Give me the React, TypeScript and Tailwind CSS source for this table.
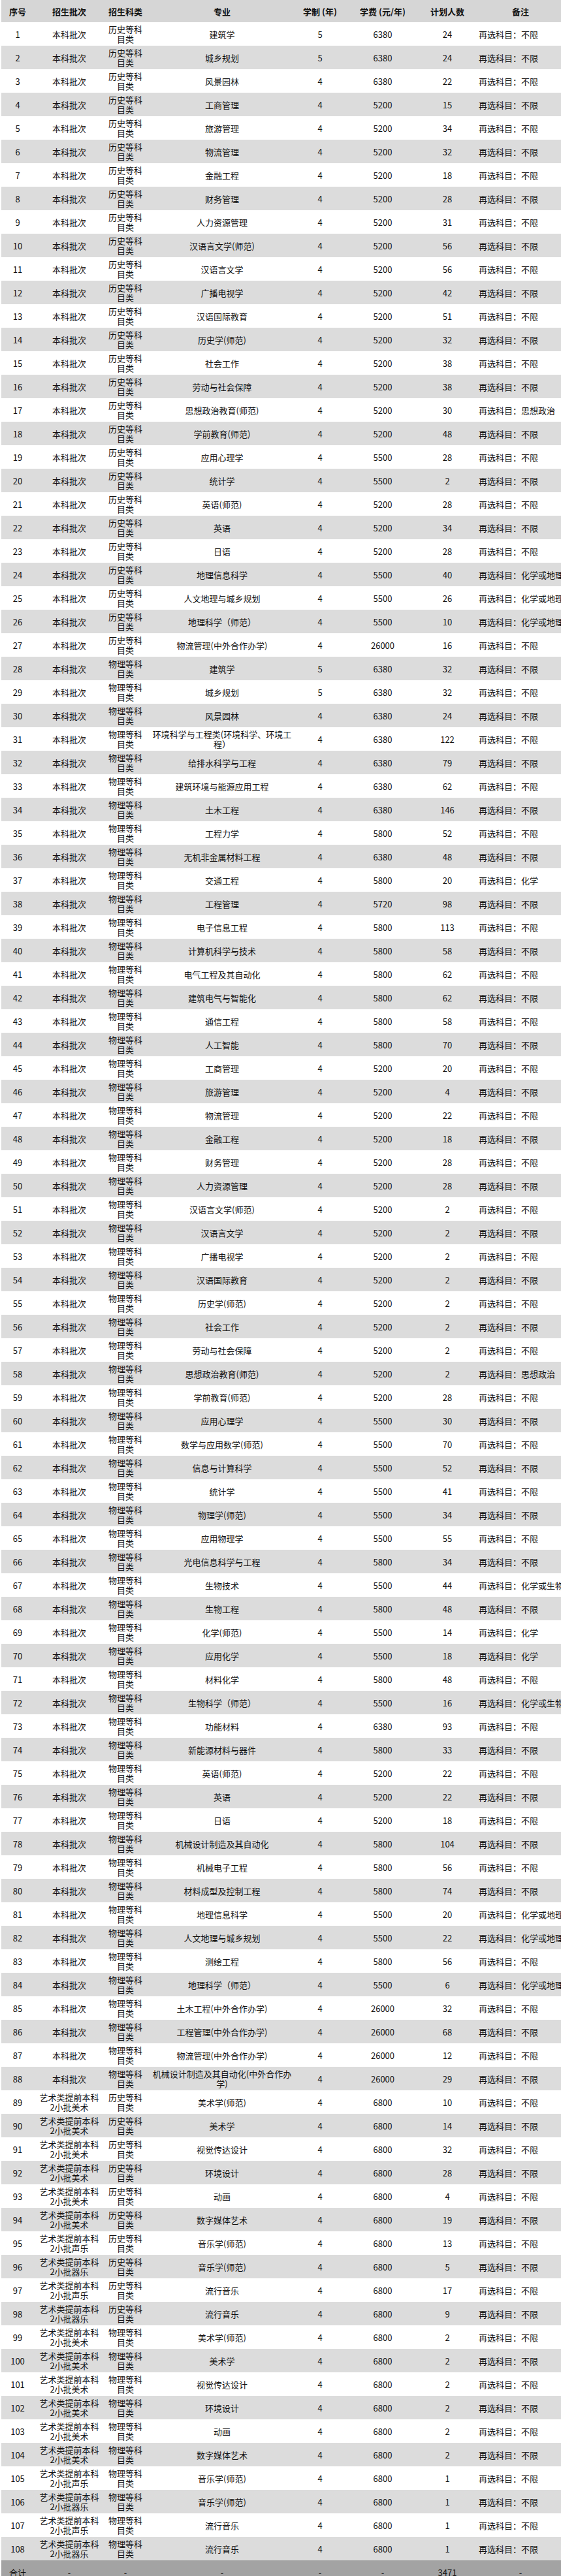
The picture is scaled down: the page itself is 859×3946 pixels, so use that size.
import React from 'react'

// 招生计划表
const B = '本科批次'
const MS = '艺术类提前本科2小批美术'
const SY = '艺术类提前本科2小批声乐'
const QY = '艺术类提前本科2小批器乐'
const H = '历史等科目类'
const P = '物理等科目类'
const BX = '不限'
const DL = '化学或地理'
const SW = '化学或生物'

type Row = [string, string, string, number, number, number, string]

const rows: Row[] = [
  [B, H, '建筑学', 5, 6380, 24, BX],
  [B, H, '城乡规划', 5, 6380, 24, BX],
  [B, H, '风景园林', 4, 6380, 22, BX],
  [B, H, '工商管理', 4, 5200, 15, BX],
  [B, H, '旅游管理', 4, 5200, 34, BX],
  [B, H, '物流管理', 4, 5200, 32, BX],
  [B, H, '金融工程', 4, 5200, 18, BX],
  [B, H, '财务管理', 4, 5200, 28, BX],
  [B, H, '人力资源管理', 4, 5200, 31, BX],
  [B, H, '汉语言文学(师范)', 4, 5200, 56, BX],
  [B, H, '汉语言文学', 4, 5200, 56, BX],
  [B, H, '广播电视学', 4, 5200, 42, BX],
  [B, H, '汉语国际教育', 4, 5200, 51, BX],
  [B, H, '历史学(师范)', 4, 5200, 32, BX],
  [B, H, '社会工作', 4, 5200, 38, BX],
  [B, H, '劳动与社会保障', 4, 5200, 38, BX],
  [B, H, '思想政治教育(师范)', 4, 5200, 30, '思想政治'],
  [B, H, '学前教育(师范)', 4, 5200, 48, BX],
  [B, H, '应用心理学', 4, 5500, 28, BX],
  [B, H, '统计学', 4, 5500, 2, BX],
  [B, H, '英语(师范)', 4, 5200, 28, BX],
  [B, H, '英语', 4, 5200, 34, BX],
  [B, H, '日语', 4, 5200, 28, BX],
  [B, H, '地理信息科学', 4, 5500, 40, DL],
  [B, H, '人文地理与城乡规划', 4, 5500, 26, DL],
  [B, H, '地理科学（师范）', 4, 5500, 10, DL],
  [B, H, '物流管理(中外合作办学)', 4, 26000, 16, BX],
  [B, P, '建筑学', 5, 6380, 32, BX],
  [B, P, '城乡规划', 5, 6380, 32, BX],
  [B, P, '风景园林', 4, 6380, 24, BX],
  [B, P, '环境科学与工程类(环境科学、环境工程）', 4, 6380, 122, BX],
  [B, P, '给排水科学与工程', 4, 6380, 79, BX],
  [B, P, '建筑环境与能源应用工程', 4, 6380, 62, BX],
  [B, P, '土木工程', 4, 6380, 146, BX],
  [B, P, '工程力学', 4, 5800, 52, BX],
  [B, P, '无机非金属材料工程', 4, 6380, 48, BX],
  [B, P, '交通工程', 4, 5800, 20, '化学'],
  [B, P, '工程管理', 4, 5720, 98, BX],
  [B, P, '电子信息工程', 4, 5800, 113, BX],
  [B, P, '计算机科学与技术', 4, 5800, 58, BX],
  [B, P, '电气工程及其自动化', 4, 5800, 62, BX],
  [B, P, '建筑电气与智能化', 4, 5800, 62, BX],
  [B, P, '通信工程', 4, 5800, 58, BX],
  [B, P, '人工智能', 4, 5800, 70, BX],
  [B, P, '工商管理', 4, 5200, 20, BX],
  [B, P, '旅游管理', 4, 5200, 4, BX],
  [B, P, '物流管理', 4, 5200, 22, BX],
  [B, P, '金融工程', 4, 5200, 18, BX],
  [B, P, '财务管理', 4, 5200, 28, BX],
  [B, P, '人力资源管理', 4, 5200, 28, BX],
  [B, P, '汉语言文学(师范)', 4, 5200, 2, BX],
  [B, P, '汉语言文学', 4, 5200, 2, BX],
  [B, P, '广播电视学', 4, 5200, 2, BX],
  [B, P, '汉语国际教育', 4, 5200, 2, BX],
  [B, P, '历史学(师范)', 4, 5200, 2, BX],
  [B, P, '社会工作', 4, 5200, 2, BX],
  [B, P, '劳动与社会保障', 4, 5200, 2, BX],
  [B, P, '思想政治教育(师范)', 4, 5200, 2, '思想政治'],
  [B, P, '学前教育(师范)', 4, 5200, 28, BX],
  [B, P, '应用心理学', 4, 5500, 30, BX],
  [B, P, '数学与应用数学(师范)', 4, 5500, 70, BX],
  [B, P, '信息与计算科学', 4, 5500, 52, BX],
  [B, P, '统计学', 4, 5500, 41, BX],
  [B, P, '物理学(师范)', 4, 5500, 34, BX],
  [B, P, '应用物理学', 4, 5500, 55, BX],
  [B, P, '光电信息科学与工程', 4, 5800, 34, BX],
  [B, P, '生物技术', 4, 5500, 44, SW],
  [B, P, '生物工程', 4, 5800, 48, BX],
  [B, P, '化学(师范)', 4, 5500, 14, '化学'],
  [B, P, '应用化学', 4, 5500, 18, '化学'],
  [B, P, '材料化学', 4, 5800, 48, BX],
  [B, P, '生物科学（师范）', 4, 5500, 16, SW],
  [B, P, '功能材料', 4, 6380, 93, BX],
  [B, P, '新能源材料与器件', 4, 5800, 33, BX],
  [B, P, '英语(师范)', 4, 5200, 22, BX],
  [B, P, '英语', 4, 5200, 22, BX],
  [B, P, '日语', 4, 5200, 18, BX],
  [B, P, '机械设计制造及其自动化', 4, 5800, 104, BX],
  [B, P, '机械电子工程', 4, 5800, 56, BX],
  [B, P, '材料成型及控制工程', 4, 5800, 74, BX],
  [B, P, '地理信息科学', 4, 5500, 20, DL],
  [B, P, '人文地理与城乡规划', 4, 5500, 22, DL],
  [B, P, '测绘工程', 4, 5800, 56, BX],
  [B, P, '地理科学（师范）', 4, 5500, 6, DL],
  [B, P, '土木工程(中外合作办学)', 4, 26000, 32, BX],
  [B, P, '工程管理(中外合作办学)', 4, 26000, 68, BX],
  [B, P, '物流管理(中外合作办学)', 4, 26000, 12, BX],
  [B, P, '机械设计制造及其自动化(中外合作办学)', 4, 26000, 29, BX],
  [MS, H, '美术学(师范)', 4, 6800, 10, BX],
  [MS, H, '美术学', 4, 6800, 14, BX],
  [MS, H, '视觉传达设计', 4, 6800, 32, BX],
  [MS, H, '环境设计', 4, 6800, 28, BX],
  [MS, H, '动画', 4, 6800, 4, BX],
  [MS, H, '数字媒体艺术', 4, 6800, 19, BX],
  [SY, H, '音乐学(师范)', 4, 6800, 13, BX],
  [QY, H, '音乐学(师范)', 4, 6800, 5, BX],
  [SY, H, '流行音乐', 4, 6800, 17, BX],
  [QY, H, '流行音乐', 4, 6800, 9, BX],
  [MS, P, '美术学(师范)', 4, 6800, 2, BX],
  [MS, P, '美术学', 4, 6800, 2, BX],
  [MS, P, '视觉传达设计', 4, 6800, 2, BX],
  [MS, P, '环境设计', 4, 6800, 2, BX],
  [MS, P, '动画', 4, 6800, 2, BX],
  [MS, P, '数字媒体艺术', 4, 6800, 2, BX],
  [SY, P, '音乐学(师范)', 4, 6800, 1, BX],
  [QY, P, '音乐学(师范)', 4, 6800, 1, BX],
  [SY, P, '流行音乐', 4, 6800, 1, BX],
  [QY, P, '流行音乐', 4, 6800, 1, BX],
]

export default function App() {
  return (
    <div className="w-full overflow-hidden bg-white">
      <table className="ml-[2px] w-[870px] table-fixed border-collapse font-['Noto_Sans_CJK_SC',sans-serif] text-[13px] leading-[15px] text-[#111]">
        <colgroup>
          <col className="w-[50px]" />
          <col className="w-[108px]" />
          <col className="w-[64px]" />
          <col className="w-[232px]" />
          <col className="w-[68px]" />
          <col className="w-[124px]" />
          <col className="w-[74px]" />
          <col className="w-[150px]" />
        </colgroup>
        <thead>
          <tr className="h-[34px] bg-[#d6d6d6] font-bold">
            <th className="px-1 text-center">序号</th>
            <th className="px-1 text-center">招生批次</th>
            <th className="px-1 text-center">招生科类</th>
            <th className="px-1 text-center">专业</th>
            <th className="px-1 text-center">学制 (年)</th>
            <th className="px-1 text-center">学费 (元/年)</th>
            <th className="px-1 text-center">计划人数</th>
            <th className="px-1 text-center">备注</th>
          </tr>
        </thead>
        <tbody>
          {rows.map((r, i) => (
            <tr key={i} className={i % 2 === 1 ? 'h-[36px] bg-[#dcdcdc]' : 'h-[36px] bg-white'}>
              <td className="px-1 text-center">{i + 1}</td>
              <td className="px-[6px] text-center">{r[0]}</td>
              <td className="px-[4px] text-center">{r[1]}</td>
              <td className="px-[7px] text-center">{r[2]}</td>
              <td className="px-1 text-center">{r[3]}</td>
              <td className="px-1 text-center">{r[4]}</td>
              <td className="px-1 text-center">{r[5]}</td>
              <td className="whitespace-nowrap pl-[11px] text-left">再选科目：{r[6]}</td>
            </tr>
          ))}
          <tr className="h-[36px] bg-[#a3a3a3]">
            <td className="px-1 text-center">合计</td>
            <td className="text-center">-</td>
            <td className="text-center">-</td>
            <td className="text-center">-</td>
            <td className="text-center">-</td>
            <td className="text-center">-</td>
            <td className="text-center">3471</td>
            <td className="text-center">-</td>
          </tr>
        </tbody>
      </table>
    </div>
  )
}
